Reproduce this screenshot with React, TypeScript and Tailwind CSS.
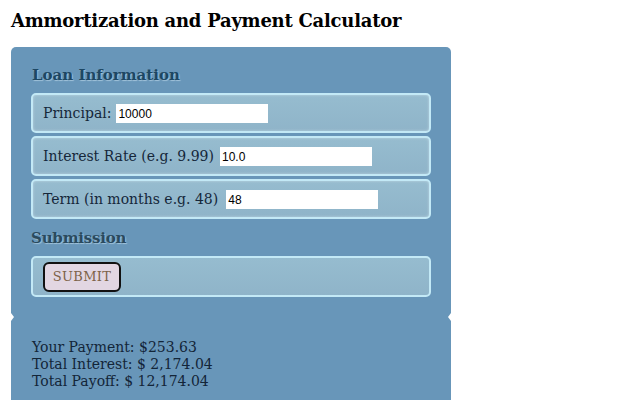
import React from "react";

function Row({ label, value, gap }: { label: string; value: string; gap: string }) {
  return (
    <div className="h-[40px] mb-[3px] rounded-[5px] border-2 border-[#c3e9f6] bg-gradient-to-b from-[#96bccf] to-[#8fb4c9] shadow-[inset_0_0_3px_rgba(255,255,255,0.4)] flex items-center pl-[10px]">
      <span className={`text-[14px] text-[#15273a] ${gap} font-['DejaVu_Serif',serif]`}>{label}</span>
      <input
        readOnly
        value={value}
        className="w-[152px] h-[19px] mt-[1px] bg-white text-[12px] text-black px-[2px] outline-none border-0 font-['Liberation_Sans',Arial,sans-serif]"
      />
    </div>
  );
}

export default function App() {
  return (
    <div className="w-[640px] h-[400px] bg-white overflow-hidden font-['DejaVu_Serif',serif]">
      <h1 className="pl-[11px] pt-[10px] text-[18px] font-bold text-black leading-[21px] tracking-[-0.25px]">
        Ammortization and Payment Calculator
      </h1>
      <div className="ml-[11px] mt-[16px] w-[440px]">
        <div className="bg-[#6896b9] rounded-t-[5px] pt-[18px] px-[20px] pb-[18px]">
          <div className="text-[15px] font-bold text-[#1d4763] leading-[20px] mb-[8px] pl-[1px] [text-shadow:1px_1px_1px_rgba(200,225,240,0.6)]">
            Loan Information
          </div>
          <Row label="Principal:" value="10000" gap="mr-[5px]" />
          <Row label="Interest Rate (e.g. 9.99)" value="10.0" gap="mr-[6px]" />
          <Row label="Term (in months e.g. 48)" value="48" gap="mr-[8px]" />
          <div className="mt-[9px] mb-[8px] text-[15px] font-bold text-[#2a4a5e] leading-[20px] tracking-[-0.2px] [text-shadow:1px_1px_1px_rgba(200,225,240,0.6)]">
            Submission
          </div>
          <div className="h-[41px] rounded-[5px] border-2 border-[#c3e9f6] bg-gradient-to-b from-[#96bccf] to-[#8fb4c9] flex items-center pl-[10px]">
            <button className="w-[78px] h-[30px] rounded-[6px] border-2 border-[#111] bg-[#e2d6e2] text-[13px] tracking-[0.3px] text-[#7d6248] flex items-center justify-center font-['DejaVu_Serif',serif]">
              SUBMIT
            </button>
          </div>
        </div>
        <div className="relative bg-[#6896b9] h-[90px] pt-[24px] pl-[21px]">
          <span className="absolute left-0 -top-[2px] w-0 h-0 border-y-[4px] border-y-transparent border-l-[3px] border-l-white" />
          <span className="absolute right-0 -top-[2px] w-0 h-0 border-y-[4px] border-y-transparent border-r-[3px] border-r-white" />
          <div className="text-[14px] leading-[17px] text-[#132538]">
            <div>Your Payment: $253.63</div>
            <div>Total Interest: $ 2,174.04</div>
            <div>Total Payoff: $ 12,174.04</div>
          </div>
        </div>
      </div>
    </div>
  );
}
